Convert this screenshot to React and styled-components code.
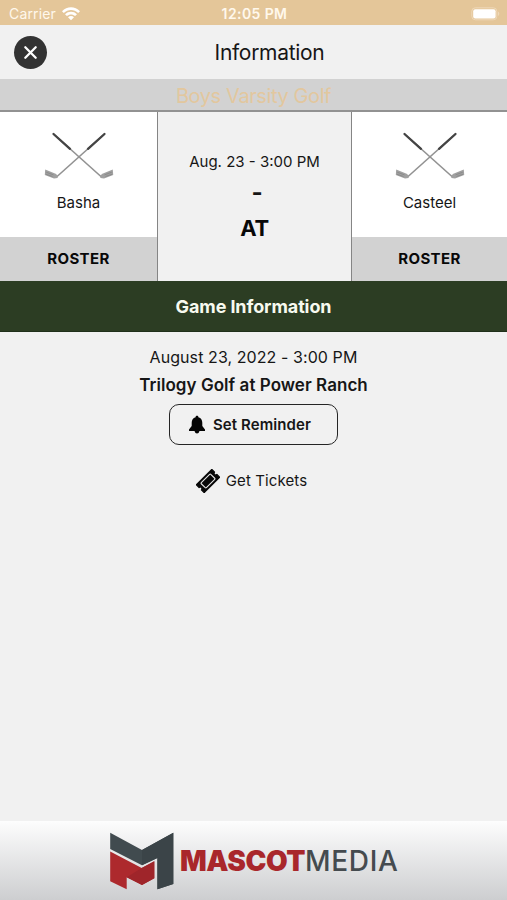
import React from 'react';
import styled, { createGlobalStyle } from 'styled-components';

const Global = createGlobalStyle`
  * { box-sizing: border-box; }
  body { margin: 0; background: #f1f1f1; font-family: Inter, "Liberation Sans", sans-serif; color: #111; }
  svg { display: block; flex: none; }
`;

const Screen = styled.div`
  width: 507px;
  height: 900px;
  display: flex;
  flex-direction: column;
  overflow: hidden;
  background: #f1f1f1;
`;

const Label = styled.span`
  display: block;
  white-space: nowrap;
  font-size: ${(p) => p.$size}px;
  line-height: ${(p) => p.$line || 20}px;
  font-weight: ${(p) => p.$weight || 400};
  letter-spacing: ${(p) => p.$track || 0}px;
  color: ${(p) => p.$color || '#161616'};
`;

const StatusBar = styled.div`
  height: 25px;
  flex: none;
  display: grid;
  grid-template-columns: 1fr auto 1fr;
  align-items: center;
  padding: 3px 7px 0 9px;
  background: #e4c699;
`;
const Carrier = styled.div`
  display: flex;
  align-items: center;
  gap: 6px;
`;
const BatterySlot = styled.div`
  display: flex;
  justify-content: flex-end;
`;

const Header = styled.header`
  height: 54px;
  flex: none;
  display: grid;
  grid-template-columns: 33px 1fr 15px;
  align-items: center;
  justify-items: center;
  padding: 1px 0 0 14px;
  background: #f1f1f1;
`;
const CloseButton = styled.button`
  width: 33px;
  height: 33px;
  padding: 0;
  border: 0;
  border-radius: 50%;
  background: #333;
  display: grid;
  place-items: center;
`;

const SportBar = styled.div`
  height: 33px;
  flex: none;
  display: flex;
  justify-content: center;
  padding-top: 4px;
  background: #d2d2d2;
  border-bottom: 2px solid #929292;
`;

const Matchup = styled.section`
  height: 169px;
  flex: none;
  display: grid;
  grid-template-columns: 157px 195px 155px;
`;
const Team = styled.div`
  display: flex;
  flex-direction: column;
  background: #fff;
`;
const TeamBody = styled.div`
  height: 125px;
  display: flex;
  flex-direction: column;
  align-items: center;
  padding-top: 19px;
  gap: 11px;
`;
const Roster = styled.div`
  flex: 1;
  display: grid;
  place-items: center;
  background: #d2d2d2;
`;
const Center = styled.div`
  display: flex;
  flex-direction: column;
  align-items: center;
  padding-top: 40px;
  border: solid #858585;
  border-width: 0 1px;
  background: #f1f1f1;
`;
const Score = styled(Label)`
  padding-left: 5px;
`;

const SectionTitle = styled.div`
  height: 51px;
  flex: none;
  display: grid;
  place-items: center;
  padding-top: 2px;
  background: #2c3d23;
  border-bottom: 1px solid #20301b;
`;

const Details = styled.main`
  flex: 1;
  display: flex;
  flex-direction: column;
  align-items: center;
  padding-top: 14px;
`;
const Reminder = styled.button`
  width: 169px;
  height: 41px;
  margin-top: 2px;
  padding: 0 0 0 18px;
  display: flex;
  align-items: center;
  gap: 7px;
  border: 1.5px solid #252525;
  border-radius: 10px;
  background: transparent;
  font-family: inherit;
`;
const Tickets = styled.div`
  display: flex;
  align-items: center;
  gap: 6px;
  margin: 24px 0 0 -4px;
`;

const Footer = styled.footer`
  height: 79px;
  flex: none;
  display: flex;
  align-items: flex-start;
  padding: 11px 0 0 109px;
  gap: 6px;
  background: linear-gradient(#fdfdfd, #cdced0);
`;
const Wordmark = styled.div`
  display: flex;
  margin-top: 14px;
`;

const Wifi = () => (
  <svg width="18" height="14" viewBox="0 0 18 14" fill="#fff">
    <path d="M0 4.2C5-1.1 13-1.1 18 4.2L16.2 6C12 2 6 2 1.8 6Z" />
    <path d="M3 7.2C6.3 3.9 11.7 3.9 15 7.2L13.1 9C10.7 6.9 7.3 6.9 4.9 9Z" />
    <path d="M6 10.2C7.7 8.7 10.3 8.7 12 10.2L9 13.3Z" />
  </svg>
);

const Battery = () => (
  <svg width="29" height="14" viewBox="0 0 29 14">
    <rect x=".8" y=".8" width="25" height="12" rx="3.5" fill="none" stroke="#eed8b8" />
    <rect x="2.2" y="2.2" width="22.4" height="9.2" rx="2" fill="#fff" />
    <path d="M27 4.5Q29.6 6.7 27 9Z" fill="#eed8b8" />
  </svg>
);

const Cross = () => (
  <svg width="15" height="15" viewBox="0 0 15 15">
    <path d="M2.3 2.3L12.7 12.7M12.7 2.3L2.3 12.7" stroke="#fff" strokeWidth="2.3" strokeLinecap="round" />
  </svg>
);

const Club = () => (
  <g>
    <path d="M10.5 3L58.5 46" stroke="#929292" strokeWidth="1.6" />
    <path d="M10.5 3L27 17.8" stroke="#444" strokeWidth="2.3" strokeLinecap="round" />
    <path d="M57 44.5L60 42.6L69.8 38.4L70.2 44L61 47.5L57.5 47Z" fill="#a0a0a0" />
    <path d="M62.5 45.5L69 43.3M61.5 43.9L68.8 41.2" stroke="#858585" strokeWidth=".8" />
  </g>
);
const Clubs = () => (
  <svg width="72" height="51" viewBox="0 0 72 51">
    <Club />
    <g transform="translate(72 0) scale(-1 1)"><Club /></g>
  </svg>
);

const Bell = () => (
  <svg width="18" height="19" viewBox="0 0 18 19">
    <path d="M9 .8C10 .8 10.4 1.4 10.4 2.2C13.1 3 14.3 5 14.3 7.8V11L17 14.4V16H1V14.4L3.7 11V7.8C3.7 5 4.9 3 7.6 2.2C7.6 1.4 8 .8 9 .8ZM6.5 16H11.5Q10.8 18.5 9 18.5T6.5 16Z" fill="#050505" />
  </svg>
);

const Ticket = () => (
  <svg width="24" height="24" viewBox="0 0 24 24">
    <g transform="translate(12 12) rotate(-45)">
      <path d="M-11 -5.6H11V-1.6A1.6 1.6 0 0 0 11 1.6V5.6H-11V1.6A1.6 1.6 0 0 0 -11 -1.6Z" fill="#080808" stroke="#080808" strokeLinejoin="round" />
      <rect x="-6.7" y="-3.6" width="13.4" height="7.2" rx=".8" fill="none" stroke="#e5e5e5" strokeWidth="1.1" />
    </g>
  </svg>
);

const Logo = () => (
  <svg width="65" height="58" viewBox="0 0 65 58">
    <path d="M1.2 .8L33 18L64.3 .8V52L48.4 57.2V26L33 33.2L1.2 17Z" fill="#414b4f" />
    <path d="M33 18L64.3 .8V52L48.4 57.2V26L33 33.2Z" fill="#3b4448" />
    <path d="M1.2 19.4L32.7 36L45.3 29.2V46.3L33 53L17.7 45.2V57.2L1.2 49.2Z" fill="#ad292d" />
    <path d="M32.7 36L45.3 29.2V46.3L33 53L17.7 45.2Z" fill="#9f252a" />
  </svg>
);

const TeamCard = ({ name }) => (
  <Team>
    <TeamBody>
      <Clubs />
      <Label $size={15}>{name}</Label>
    </TeamBody>
    <Roster><Label $size={15} $weight={700} $track={0.4} $color="#080808">ROSTER</Label></Roster>
  </Team>
);

export default function App() {
  return (
    <Screen>
      <Global />
      <StatusBar>
        <Carrier><Label $size={14} $track={0.15} $color="#fff8ec">Carrier</Label><Wifi /></Carrier>
        <Label $size={14} $weight={600} $track={0.4} $color="#fff8ec">12:05 PM</Label>
        <BatterySlot><Battery /></BatterySlot>
      </StatusBar>
      <Header>
        <CloseButton aria-label="Close"><Cross /></CloseButton>
        <Label $size={21} $line={26} $track={-0.3}>Information</Label>
      </Header>
      <SportBar><Label $size={20} $line={26} $track={-0.4} $color="#e2c79e">Boys Varsity Golf</Label></SportBar>
      <Matchup>
        <TeamCard name="Basha" />
        <Center>
          <Label $size={15}>Aug. 23 - 3:00 PM</Label>
          <Score $size={24} $line={42} $weight={700}>-</Score>
          <Label $size={22} $line={28} $weight={700} $track={-0.4} $color="#080808">AT</Label>
        </Center>
        <TeamCard name="Casteel" />
      </Matchup>
      <SectionTitle><Label $size={18} $line={24} $weight={700} $track={-0.1} $color="#f7faef">Game Information</Label></SectionTitle>
      <Details>
        <Label $size={16} $line={22} $track={0.08}>August 23, 2022 - 3:00 PM</Label>
        <Label $size={17} $line={34} $weight={600} $track={0.05}>Trilogy Golf at Power Ranch</Label>
        <Reminder><Bell /><Label $size={15} $weight={600} $track={0.08}>Set Reminder</Label></Reminder>
        <Tickets><Ticket /><Label $size={15} $track={0.1}>Get Tickets</Label></Tickets>
      </Details>
      <Footer>
        <Logo />
        <Wordmark>
          <Label $size={28} $line={30} $weight={900} $track={-0.45} $color="#a9272b">MASCOT</Label>
          <Label $size={28} $line={30} $weight={500} $track={0.65} $color="#454b4f">MEDIA</Label>
        </Wordmark>
      </Footer>
    </Screen>
  );
}
